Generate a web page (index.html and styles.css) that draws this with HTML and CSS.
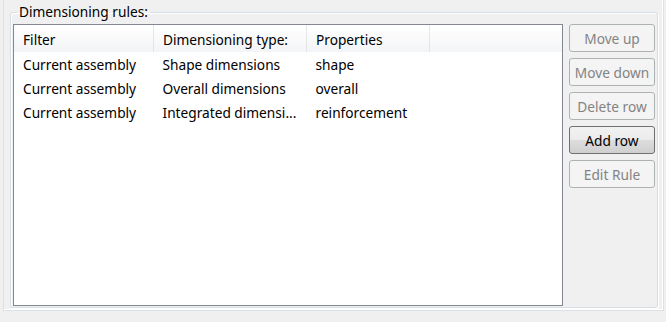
FILE: index.html
```html
<!DOCTYPE html>
<html lang="en">
<head>
    <meta charset="UTF-8">
    <meta name="viewport" content="width=device-width, initial-scale=1.0">
    <title>Dimensioning rules</title>
    <link rel="stylesheet" href="styles.css">
</head>
<body>
    <div class="panel">
        <fieldset class="group">
            <legend>Dimensioning rules:</legend>
            <div class="content">
                <div class="list">
                    <table class="rules">
                        <thead>
                            <tr>
                                <th class="col-filter">Filter</th>
                                <th class="col-type">Dimensioning type:</th>
                                <th class="col-props">Properties</th>
                                <th class="col-rest"></th>
                            </tr>
                        </thead>
                        <tbody>
                            <tr>
                                <td>Current assembly</td>
                                <td>Shape dimensions</td>
                                <td>shape</td>
                                <td></td>
                            </tr>
                            <tr>
                                <td>Current assembly</td>
                                <td>Overall dimensions</td>
                                <td>overall</td>
                                <td></td>
                            </tr>
                            <tr>
                                <td>Current assembly</td>
                                <td>Integrated dimensi...</td>
                                <td>reinforcement</td>
                                <td></td>
                            </tr>
                        </tbody>
                    </table>
                </div>
                <div class="buttons">
                    <button type="button" disabled>Move up</button>
                    <button type="button" disabled>Move down</button>
                    <button type="button" disabled>Delete row</button>
                    <button type="button" class="default">Add row</button>
                    <button type="button" disabled>Edit Rule</button>
                </div>
            </div>
        </fieldset>
    </div>
</body>
</html>
```

FILE: styles.css
```css
body {
    font-family: "Noto Sans", "Open Sans", sans-serif;
    font-size: 13.7px;
    background-color: #f0f0f0;
    color: #000;
    margin: 0;
}

.panel {
    margin-left: 3px;
    width: 659px;
    height: 310px;
    border: 1px solid #dbe1e6;
    border-top: none;
    box-shadow: inset -1px -1px 0 #fff;
}

.group {
    margin: 0 5px 0 6px;
    padding: 0 1px 1px 2px;
    border: 1px solid #d5dfe5;
    border-radius: 3px;
    box-shadow: 1px 1px 0 #fff, inset 1px 1px 0 #fff;
}

.group legend {
    margin-left: 4px;
    padding: 0 2px;
    line-height: 24px;
}

.content {
    display: flex;
    gap: 6px;
}

.list {
    width: 548px;
    height: 280px;
    border: 1px solid #828790;
    background-color: #fff;
}

.rules {
    border-collapse: collapse;
    table-layout: fixed;
    width: 100%;
}

.rules th {
    height: 26px;
    padding: 1px 0 0 9px;
    text-align: left;
    font-weight: normal;
    background: linear-gradient(#ffffff, #f3f4f6);
    border-right: 1px solid #e3e5e8;
    white-space: nowrap;
}

.rules th.col-rest {
    border-right: none;
}

.col-filter {
    width: 130px;
}

.col-type {
    width: 143px;
}

.col-props {
    width: 113px;
}

.rules td {
    height: 24px;
    padding: 0 0 0 9px;
    white-space: nowrap;
    overflow: hidden;
}

.buttons {
    display: flex;
    flex-direction: column;
    gap: 6px;
}

button {
    width: 86px;
    height: 28px;
    padding: 0;
    font-family: inherit;
    font-size: 13.7px;
    color: #000;
    border: 1px solid #707070;
    border-radius: 3px;
    background: linear-gradient(#f2f2f2 0%, #ebebeb 50%, #dddddd 51%, #cfcfcf 100%);
}

button:disabled {
    color: #838383;
    border-color: #adb2b5;
    background: #f4f4f4;
}
```
